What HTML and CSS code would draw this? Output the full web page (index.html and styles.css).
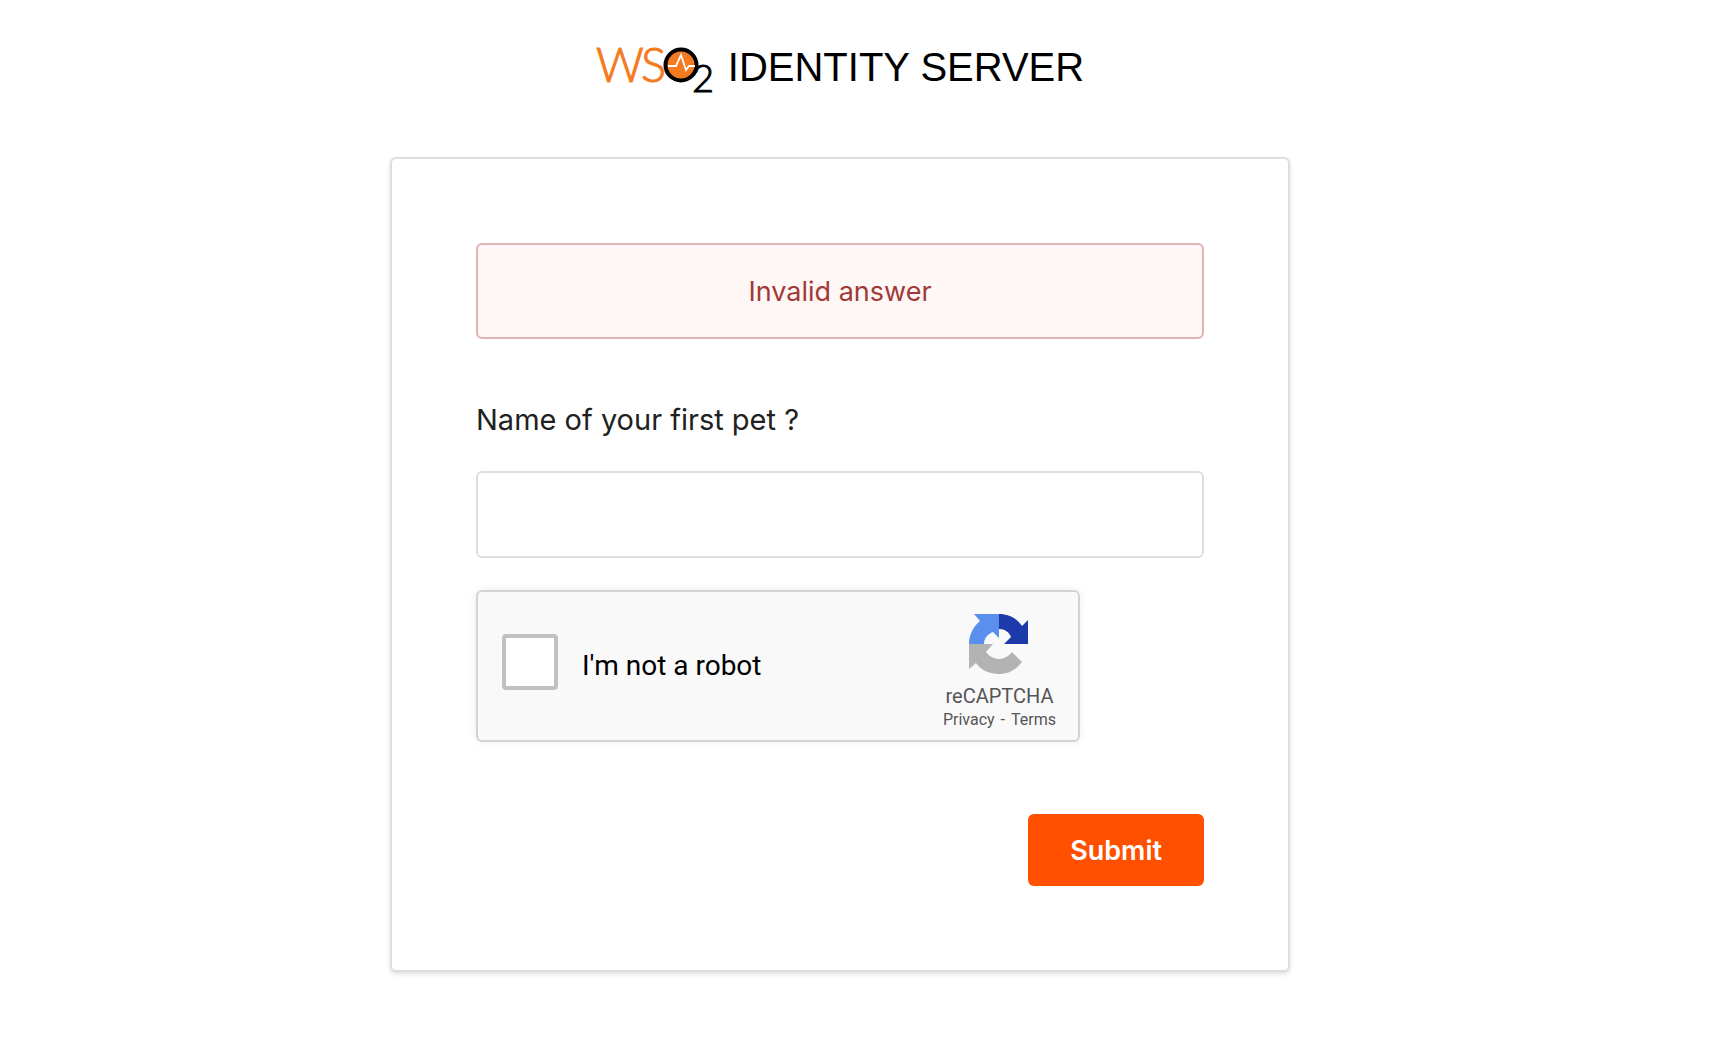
FILE: index.html
```html
<!DOCTYPE html>
<html lang="en">
<head>
  <meta charset="utf-8">
  <meta name="viewport" content="width=device-width, initial-scale=1">
  <title>WSO2 Identity Server</title>
  <link rel="stylesheet" href="styles.css">
</head>
<body>
  <header class="brand">
    <svg class="brand-logo" viewBox="0 -16 118 76" role="img" aria-label="WSO2">
      <text class="logo-ws" x="0" y="35">W</text>
      <text class="logo-ws" x="45" y="35">S</text>
      <text class="logo-two" x="96" y="45">2</text>
      <circle cx="85" cy="18" r="15.5" fill="#f47b20" stroke="#000" stroke-width="4"/>
      <path d="M72 19h8l5-11 5 15 3-4h6" fill="none" stroke="#fff" stroke-width="1.8"/>
    </svg>
    <h1 class="brand-name">IDENTITY SERVER</h1>
  </header>
  <main class="card">
    <form class="form">
      <div class="alert" role="alert">Invalid answer</div>
      <label class="question" for="answer">Name of your first pet ?</label>
      <input class="answer" id="answer" name="answer" type="text">
      <div class="captcha">
        <input class="captcha-box" id="robot" type="checkbox">
        <label class="captcha-label" for="robot">I'm not a robot</label>
        <div class="captcha-brand">
          <svg class="captcha-logo" viewBox="0 0 60 60" aria-hidden="true">
            <path fill="#1c3aa9" d="M30 0C39 0 48 4 53 12L59 6V30H35L42 23C40 18 36 15 30 15Z"/>
            <path fill="#5a8fee" d="M30 0V24L24 18C19 20 15 24 15 30H0C0 20 5 12 11 7L5 0Z"/>
            <path fill="#b3b3b3" d="M0 30H24L17 38C20 42 25 45 30 45C35 45 40 42 43 38L53 48C47 56 39 60 30 60C20 60 12 56 7 49L0 55Z"/>
          </svg>
          <span class="captcha-name">reCAPTCHA</span>
          <span class="captcha-links"><a href="#privacy">Privacy</a><span>-</span><a href="#terms">Terms</a></span>
        </div>
      </div>
      <button class="submit" type="submit">Submit</button>
    </form>
  </main>
</body>
</html>
```
FILE: styles.css
```css
* {
  box-sizing: border-box;
}

body {
  margin: 0;
  padding: 31px 36px 72px 0;
  background: #fff;
  color: #212121;
  font-family: Inter, "Noto Sans", sans-serif;
  font-size: 27px;
  line-height: 40px;
}

.brand {
  display: flex;
  justify-content: center;
  gap: 14px;
  margin-bottom: 50px;
}

.brand-logo {
  width: 118px;
  height: 76px;
}

.logo-ws,
.logo-two {
  font-family: Lato, sans-serif;
  font-weight: 300;
  stroke-width: 1px;
}

.logo-ws {
  font-size: 47px;
  fill: #f47b20;
  stroke: #f47b20;
}

.logo-two {
  font-size: 38px;
  fill: #000;
  stroke: #000;
}

.brand-name {
  margin: 0;
  padding-top: 16px;
  color: #000;
  font-family: "Liberation Sans", Arial, sans-serif;
  font-size: 40px;
  font-weight: 400;
  line-height: 40px;
}

.card {
  max-width: 900px;
  margin: 0 auto;
  padding: 84px;
  border: 2px solid #dededf;
  border-radius: 6px;
  background: #fff;
  box-shadow: 0 2px 4px rgba(34, 36, 38, 0.15);
}

.form {
  display: flex;
  flex-direction: column;
}

.alert {
  padding: 27px 28px 25px;
  border: 2px solid #e0b4b4;
  border-radius: 6px;
  background: #fff6f6;
  color: #9f3a38;
  text-align: center;
}

.question {
  margin: 61px 0 31px;
  font-size: 29px;
}

.answer {
  width: 100%;
  height: 87px;
  padding: 0 28px;
  border: 2px solid #dededf;
  border-radius: 6px;
  background: #fff;
  color: inherit;
  font: inherit;
}

.captcha {
  display: flex;
  align-items: center;
  width: 604px;
  max-width: 100%;
  height: 152px;
  margin-top: 32px;
  padding: 0 22px 0 24px;
  border: 2px solid #d3d3d3;
  border-radius: 6px;
  background: #f9f9f9;
  box-shadow: 0 0 8px rgba(0, 0, 0, 0.08);
  color: #000;
  font-family: Roboto, sans-serif;
  font-size: 28px;
}

.captcha-box {
  appearance: none;
  width: 56px;
  height: 56px;
  margin: 0 24px 8px 0;
  border: 4px solid #c1c1c1;
  border-radius: 4px;
  background: #fff;
}

.captcha-brand {
  display: flex;
  flex-direction: column;
  align-items: center;
  margin-left: auto;
  padding-top: 14px;
  color: #555;
}

.captcha-logo {
  width: 60px;
  height: 60px;
  margin-bottom: 10px;
}

.captcha-name {
  font-size: 20px;
  line-height: 24px;
}

.captcha-links {
  display: flex;
  gap: 6px;
  font-size: 16px;
  line-height: 24px;
}

.captcha-links a {
  color: inherit;
  text-decoration: none;
}

.submit {
  align-self: flex-end;
  height: 72px;
  margin-top: 72px;
  padding: 2px 42px 0;
  border: 0;
  border-radius: 6px;
  background: #ff5000;
  color: #fff;
  font: inherit;
  font-weight: 600;
}
```
